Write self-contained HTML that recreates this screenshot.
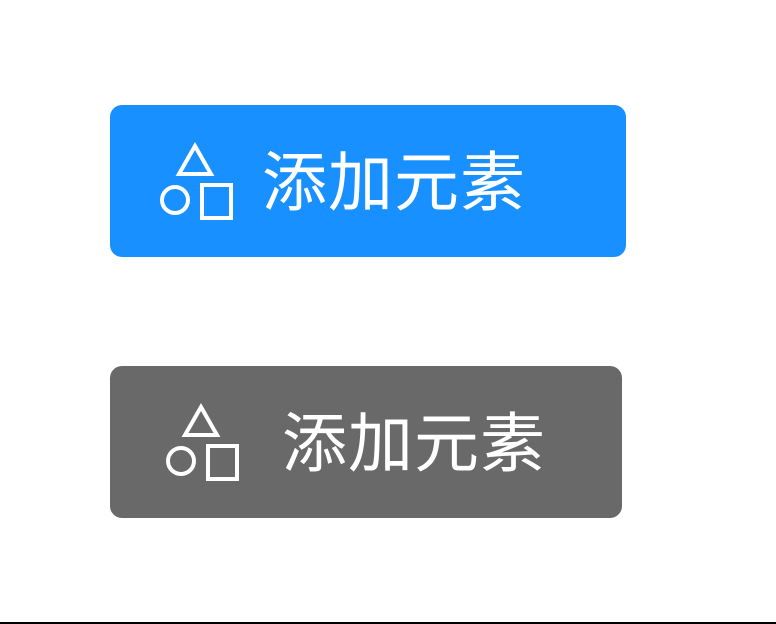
<!DOCTYPE html>
<html><head><style>
body{margin:0;width:776px;height:624px;background:#fff;position:relative;overflow:hidden;font-family:"Liberation Sans","Noto Sans CJK SC",sans-serif}
.b{position:absolute;left:110px;height:152px;border-radius:12px;color:#fff}
.t{position:absolute;font-size:65px;line-height:64px;letter-spacing:1px;white-space:nowrap}
svg{position:absolute}
</style></head><body>
<div class="b" style="top:105px;width:516px;background:#1890ff">
<svg style="left:44px;top:35px" width="80" height="80" viewBox="0 0 80 80"><g fill="none" stroke="#fff" stroke-width="4"><path d="M41 6 L57 34 L25 34 Z"/><circle cx="21" cy="60" r="13"/><rect x="48" y="45" width="29" height="33"/></g></svg>
<div class="t" style="left:152px;top:46px">添加元素</div>
</div>
<div class="b" style="top:366px;width:512px;background:#696969">
<svg style="left:50px;top:35px" width="80" height="80" viewBox="0 0 80 80"><g fill="none" stroke="#fff" stroke-width="4"><path d="M41 6 L57 34 L25 34 Z"/><circle cx="21" cy="60" r="13"/><rect x="48" y="45" width="29" height="33"/></g></svg>
<div class="t" style="left:172px;top:46px">添加元素</div>
</div>
<div style="position:absolute;left:0;top:622px;width:776px;height:2px;background:#000"></div>
</body></html>
